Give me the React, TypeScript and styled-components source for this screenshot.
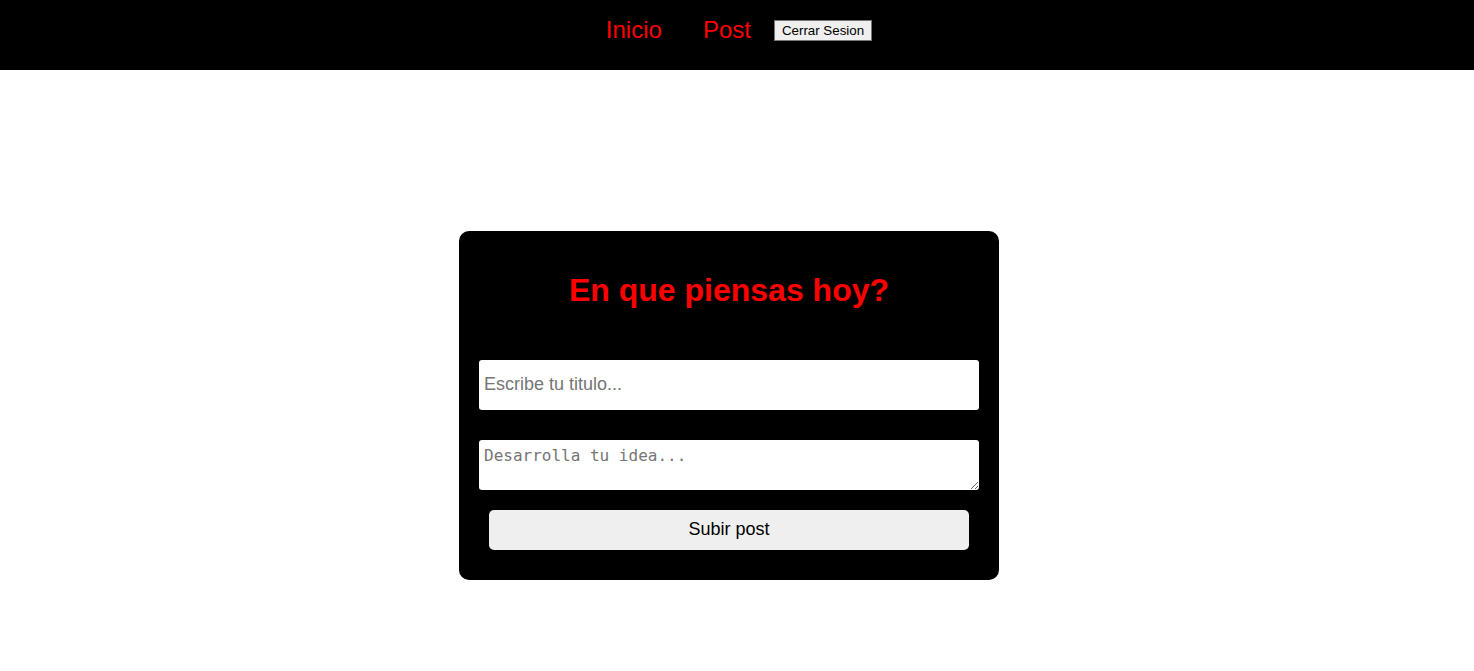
import React from "react";
import styled, { createGlobalStyle } from "styled-components";

const GlobalStyle = createGlobalStyle`
  html, body {
    margin: 0;
    padding: 0;
    background: #ffffff;
    font-family: Arial, "Liberation Sans", sans-serif;
  }
`;

const Header = styled.header`
  height: 70px;
  background: #000000;
  display: flex;
  justify-content: center;
  padding-left: 4px;
  box-sizing: border-box;
`;

const Nav = styled.nav`
  height: 60px;
  display: flex;
  align-items: center;
`;

const NavLink = styled.a<{ $space: number }>`
  color: #ff0000;
  font-family: Arial, "Liberation Sans", sans-serif;
  font-size: 24px;
  text-decoration: none;
  margin-right: ${(p) => p.$space}px;
  cursor: pointer;
`;

const LogoutButton = styled.button`
  font-family: Arial, "Liberation Sans", sans-serif;
  font-size: 13.333px;
  color: #000000;
  background: #efefef;
  border: 1px solid #767676;
  padding: 2px 7px;
  line-height: normal;
  border-radius: 0;
  box-sizing: border-box;
  height: 21px;
  white-space: nowrap;
`;

const Main = styled.main`
  display: flex;
  justify-content: center;
  padding: 161px 16px 0 0;
`;

const Card = styled.section`
  width: 540px;
  box-sizing: border-box;
  background: #000000;
  border-radius: 10px;
  padding: 20px 20px 30px;
`;

const Title = styled.h1`
  margin: 21.44px 0;
  text-align: center;
  color: #ff0000;
  font-family: Arial, "Liberation Sans", sans-serif;
  font-size: 32px;
  font-weight: bold;
`;

const Form = styled.form`
  display: flex;
  flex-direction: column;
  align-items: center;
  padding-top: 29px;
`;

const TitleInput = styled.input`
  width: 500px;
  height: 50px;
  box-sizing: border-box;
  border: none;
  border-radius: 3px;
  padding: 0 5px;
  font-family: Arial, "Liberation Sans", sans-serif;
  font-size: 18px;
  margin-bottom: 30px;
  outline: none;
  &::placeholder {
    color: #757575;
  }
`;

const IdeaArea = styled.textarea`
  width: 500px;
  height: 50px;
  box-sizing: border-box;
  border: none;
  border-radius: 3px;
  padding: 6px 5px;
  font-family: "DejaVu Sans Mono", monospace;
  font-size: 16px;
  margin: 0 0 20px;
  outline: none;
  display: block;
  &::placeholder {
    color: #757575;
  }
`;

const SubmitButton = styled.button`
  width: 480px;
  height: 40px;
  border: none;
  border-radius: 5px;
  background: #efefef;
  color: #000000;
  font-family: Arial, "Liberation Sans", sans-serif;
  font-size: 18px;
  cursor: pointer;
`;

export default function App() {
  return (
    <>
      <GlobalStyle />
      <Header>
        <Nav>
          <NavLink $space={41}>Inicio</NavLink>
          <NavLink $space={23}>Post</NavLink>
          <LogoutButton type="button">Cerrar Sesion</LogoutButton>
        </Nav>
      </Header>
      <Main>
        <Card>
          <Title>En que piensas hoy?</Title>
          <Form onSubmit={(e) => e.preventDefault()}>
            <TitleInput type="text" placeholder="Escribe tu titulo..." />
            <IdeaArea placeholder="Desarrolla tu idea..." />
            <SubmitButton type="submit">Subir post</SubmitButton>
          </Form>
        </Card>
      </Main>
    </>
  );
}
